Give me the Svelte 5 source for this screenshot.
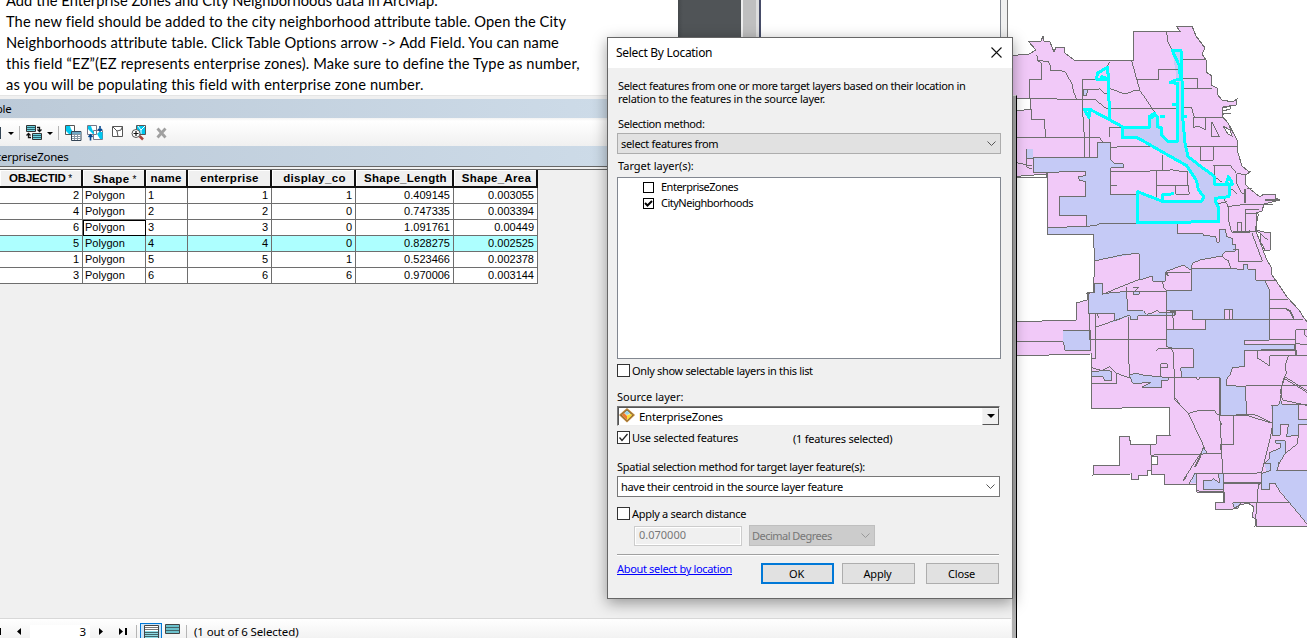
<script>
  const lines = [
    { t: 'Add the Enterprise Zones and City Neighborhoods data in ArcMap.', s: 'a' },
    { t: 'The new field should be added to the city neighborhood attribute table. Open the City', s: 'b' },
    { t: 'Neighborhoods attribute table. Click Table Options arrow -> Add Field. You can name', s: 'c' },
    { t: 'this field “EZ”(EZ represents enterprise zones). Make sure to define the Type as number,', s: 'd' },
    { t: 'as you will be populating this field with enterprise zone number.', s: 'e' }
  ];
  const heads = ['OBJECTID', 'Shape', 'name', 'enterprise', 'display_co', 'Shape_Length', 'Shape_Area'];
  const rows = [
    ['2', 'Polygon', '1', '1', '1', '0.409145', '0.003055'],
    ['4', 'Polygon', '2', '2', '0', '0.747335', '0.003394'],
    ['6', 'Polygon', '3', '3', '0', '1.091761', '0.00449'],
    ['5', 'Polygon', '4', '4', '0', '0.828275', '0.002525'],
    ['1', 'Polygon', '5', '5', '1', '0.523466', '0.002378'],
    ['3', 'Polygon', '6', '6', '6', '0.970006', '0.003144']
  ];
</script>

<div class="screen">
  <section class="top">
    <article class="doc">
      {#each lines as l}
        <p><span class={l.s}>{l.t}</span></p>
      {/each}
    </article>
    <div class="gutter"></div>
    <div class="scroll"></div>
    <div class="edge"></div>
    <div class="blank"></div>
    <div class="frame"></div>
  </section>

  <svg class="map" viewBox="1008 0 299 638" width="299" height="638" shape-rendering="crispEdges">
    <path class="pink" d="M1008 56L1029 54L1036 50L1028 41H1041L1043 36L1044 41L1050 42L1054 52L1056 47H1064L1065 53L1074 60H1133V31H1180L1176 26H1192L1196 36L1205 48L1202 54L1206 60V72L1212 76L1211 85L1217 88V94L1222 100L1233 102L1237 99L1236 105L1223 107L1222 116L1228 123L1237 140L1238 153L1242 166L1248 171H1251L1246 175L1245 184L1250 189L1260 197L1264 194H1275V198L1280 200L1264 204L1262 211L1256 213V230L1264 232H1270V250L1265 251L1263 246L1260 242V233L1256 231L1266 258L1271 267L1272 275L1281 288L1287 297L1299 310L1304 318L1310 325V526H1256V519L1252 517L1254 507L1248 503L1240 505L1231 510L1215 509V502H1224V492H1197L1196 484H1164V474H1151V470H1147V475H1138V479H1131V474L1093 475V465H1119V436H1129L1131 445L1156 444V435H1170L1169 407L1154 407L1091 409L1091 354L1008 356V322L1076 320V303L1087 300V293L1093 292L1095 262L1093 234H1047V174L1008 177Z" />
    <path class="hole" d="M1008 99H1031L1030 109L1008 112ZM1222 108L1231 106L1230 109L1223 111ZM1223 126L1230 130L1232 136L1228 134ZM1151 456H1157V464H1151Z" />

    <g transform="translate(1010 20) scale(.33333)">
      <path class="blue" d="M70 412H263V367H301V418L314 432H340V444H302V525H383L383 515L460 545H575L582 530L560 485L530 437L380 352H337V322H418V290L433 280L454 324L473 364H502V190L487 92H513L518 290L534 410L612 470L615 493H657V530L617 535L625 605L270 614L230 617V587H149V529H227V484L208 482L205 470L227 467V455L70 457ZM49 386H68V415H49ZM220 209H235L228 227H220Z" />
      <path class="line" d="M20 237L138 236L142 238H200L190 213L186 193L168 158L150 150L123 153V140L114 124L84 122L96 132V178H60V237M96 132L84 122L80 105M63 237L62 268L20 272M64 268V298H104L106 354M20 354H210L230 352L268 352L278 366M298 352V322H337M219 178V290L223 350V412M240 290V412M219 178L257 180M219 208L270 207L283 220H290M300 125L290 142M298 205L345 222L370 213H390M365 122L380 178L390 212L430 270L436 280M142 238L255 238L288 265H498M380 178H447V148H508M470 35L473 65L487 92M512 118H589M512 175H562V205M512 205H605M518 263H545L553 292H640M550 292V322L565 318L588 330V293M606 305L628 350H606ZM525 379H682M571 379V421H610V379M302 382L360 379L425 378M302 453L400 455L440 451H478L485 448L495 452L534 455M457 405V450M440 452V535M440 496H534V455M534 496L538 523H498V496M302 498L322 497M49 386V440L67 448M49 415H70M20 428L65 438M110 458V472L20 472M263 412V367H301V418L314 432H340V444H302V525H383M263 412H70V457L227 455V467L205 470L208 482L227 484V529H149V587H230V617M220 209H235L228 227H220ZM610 438L660 435L680 460L710 465M612 438L613 470L635 486M680 462V490L695 520H708M655 500L680 520M623 552L650 545M640 535L655 560V600L665 636M650 560L705 553H790M705 507V550M708 507V550M710 507H725M706 570H748M706 570V634M683 607V634M683 607H694V634M706 582H745L735 634M670 636H745L773 660" />
      <path class="wide" d="M637 283L645 280L662 281M665 332L660 320M765 540H807" />
    </g>

    <g transform="translate(1010 220) scale(.33333)">
      <path class="blue" d="M113 22L229 20L273 10L380 6H502V40H578L582 47L617 49L620 67H628V28H647L649 50L667 55V75H677V93L645 96L635 108L570 120L547 130L543 151L520 135L467 155L466 184H428V168L388 180L387 100L253 123L250 43H113ZM545 146L702 148V133H713V148H737V181H765L778 210L780 360L703 362V375L855 373V388L703 391L705 440L668 442L660 465L648 480L650 497L707 499L709 586H632L630 472H515L512 443H550V387L490 385L472 380V328H587V298H547V271H470V211H545ZM254 190H277V223L350 214L352 271L400 272L410 283L470 278L498 275V286H383V300H362L360 288L300 310L315 295V281H236V222L254 218ZM160 333L243 331V391H165L160 365ZM243 456L290 450L306 455L305 481H283L280 470L243 468ZM358 465L378 459L398 465L455 471L475 473V481H455V502H395L423 488L368 490ZM370 215H388V223H370Z" />
      <path class="pink" d="M643 268H667V298H643Z" />
      <path class="line" d="M113 22L229 20L260 15L273 10H502V40H578L582 47L617 49L620 67H628V28H647L649 50L667 55V75H677V93L645 96L635 108L570 120L547 130L543 151L520 135L467 155L466 184H428V168L388 180L387 100L340 104L253 123M635 108L645 118L655 121L662 146M545 146H660L702 148V133H713V148H737V181H765L778 210L780 360L703 362V375L855 373V388L703 391L705 440L668 442L660 465L648 480L650 497L707 499L709 586H632L630 472H568V478H560V472H475M550 443H512L515 470M550 443V387L490 385L470 380V211H545V146M470 271H547V298H587V328H472M545 298H880M643 298V268H667V298M658 268V298M457 184L462 205L470 211M470 157H540M470 155L472 168M388 178L277 223V190H254V218L229 220M277 221L350 214H470M350 200L352 271L380 272L400 272L410 283L430 278L440 271L450 278H498L495 286L383 288V300H362L360 288H352L256 322M236 222V281H315V302L340 293M256 281V416H243M240 281V360M355 290V360L358 465M243 360H330L470 358V275M160 333L243 331V391H165L160 365L20 365M486 275L490 300V328M440 392L445 386L485 387L490 400L493 472L493 530L518 565M453 472V431H472V444H453M243 456L290 450L306 455L305 481H283L280 470L243 468M243 442L275 452L300 440L320 460L360 474M243 490H320V458M358 465L378 459L398 465L455 471L475 473V481H455V502H395L423 488L368 490ZM370 203H386L375 212M370 215V223H388V215M263 282L265 295M315 281V302M667 38H720V30M683 7V36H672M726 40L757 123L686 125V90H670M737 181H800M778 238H835M778 265H825L845 280L852 295M780 360H857V330H891M857 360V408M703 391H860V408M742 391V414L780 438V408H891M835 408L825 440L830 460L821 475L811 515L818 540L891 556M707 497H891M822 475L891 517M891 375L857 370M885 330V345L891 350" />
      <path class="wide" d="M823 264L840 272L852 296M470 158L474 168M480 276H495V284" />
    </g>

    <g transform="translate(1080 370) scale(.33333)">
      <path class="blue" d="M574 106H595L601 90L608 105H655V150H690V163H655V195L620 200L625 163H603L600 197H578ZM586 212H616V250L600 275L590 302H690V468L630 400L585 340H568L570 360H545L543 310L560 305L553 280L568 265L570 247L600 235L603 222L588 220ZM370 333H395L400 325L410 333L420 340L415 311H430V360H400L370 357ZM370 232L382 250L363 253ZM340 311H349L347 340H333ZM458 399H482L473 415H463Z" />
      <path class="line" d="M574 106H595L601 90L608 105H655V150H690M690 163H655V195L620 200L625 163H603L600 197H578V106M578 160L535 138L520 134L420 136L410 133L405 122H355L325 130L284 88V0M419 23V136L424 220L428 310M461 138V223H425M325 130L373 232L310 330M214 256L240 253L375 252H424M211 223V256M216 256V312M363 253L370 232L382 250ZM325 345L345 310L520 312L545 306L572 200L578 160M350 311V360L360 364H430V311M370 333H395L400 325L410 333L420 340L415 311M370 333V357L400 360H430M432 338H545M431 340V398M431 340H545L535 345L525 470M458 399H630M458 399L463 415H473L482 399M586 212H616V250L600 275L590 302H690M586 212L588 220L603 222L600 235L570 247L568 265L553 280H572V302L545 310L545 360L570 360L568 340H585L600 365L630 400L681 462M655 195L652 222L616 250M606 50L601 90M606 48L615 20M614 20L690 68M655 105H690M499 136L578 160" />
      <path class="wide" d="M363 256L348 285L344 291M318 318L310 332M432 339H486M424 160V166M422 222V240M595 278L600 280" />
    </g>

    <path class="outline" d="M1008 56L1029 54L1036 50L1028 41H1041L1043 36L1044 41L1050 42L1054 52L1056 47H1064L1065 53L1074 60H1133V31H1180L1176 26H1192L1196 36L1205 48L1202 54L1206 60V72L1212 76L1211 85L1217 88V94L1222 100L1233 102L1237 99L1236 105L1223 107L1222 116L1228 123L1237 140L1238 153L1242 166L1248 171H1251L1246 175L1245 184L1250 189L1260 197L1264 194H1275V198L1280 200L1264 204L1262 211L1256 213V230L1264 232H1270V250L1265 251L1263 246L1260 242V233M1256 231L1266 258L1271 267L1272 275L1281 288L1287 297L1299 310L1304 318L1310 325M1310 526H1256V519L1252 517L1254 507L1248 503L1240 505L1231 510L1215 509V502H1224V492H1197L1196 484H1164V474H1151V470H1147V475H1138V479H1131V474L1093 475V465H1119V436H1129L1131 445L1156 444V435H1170L1169 407L1154 407L1091 409L1091 354L1008 356M1008 322L1076 320V303L1087 300V293L1093 292L1095 262L1093 234H1047V174L1008 177M1222 108L1231 106L1230 109L1223 111ZM1223 126L1230 130L1232 136L1228 134ZM1151 456H1157V464H1151Z" />

    <g class="glow" transform="translate(1010 20) scale(.33333)">
      <path d="M383 608V515L460 545H573L582 532L565 508L560 483L530 437L380 352H337V322H418V290L433 280L443 292V320L454 324L455 345L473 364H502V190L480 188L498 180H512L507 135L487 92H513L516 180L518 290L525 370L534 410L580 445L612 468L615 493H667L664 483L655 470L650 487L658 493L657 530L617 535L618 548L625 560V605Z" />
      <path d="M337 320L240 268H222L237 292L240 270M298 298L296 180L260 178L262 160L292 142L296 178L272 168M457 543L458 525L492 521M450 290H466M487 253H502M518 290H532M424 295L435 285" />
    </g>
  </svg>

  <section class="win">
    <header class="band first"><span>Table</span></header>
    <div class="tools">
      <i class="stub"></i>
      <i class="tri"></i>
      <i class="sep"></i>
      <svg class="t1" width="17" height="16" viewBox="0 0 17 16">
        <path d="M.5.500h9v6h-9zM6.500 8.500h9v6h-9z" fill="#6fd2df" stroke="#333" />
        <path d="M1 2.500h8M1 4.500h8M7 10.500h8M7 12.500h8" stroke="#26616c" />
        <path d="M11 2.500h2.500v4M11.500 4.500l2 2 2-2M5 12.500H2.500v-4M.5 10.500l2-2 2 2" fill="none" stroke="#111" stroke-width="1.300" />
      </svg>
      <i class="tri"></i>
      <i class="sep"></i>
      <svg class="t2" width="17" height="16" viewBox="0 0 17 16">
        <path d="M.5.5h9v9h-9z" fill="#fff" stroke="#555" /><path d="M1 1h4l1 3 3 5H4L1 6z" fill="#00c8f0" />
        <path d="M6.500 6.500h9.500v9H6.500z" fill="#fff" stroke="#345" /><path d="M7 7h9v2H7z" fill="#6fa7c4" /><path d="M7 9.500h9M7 11.500h9M7 13.500h9M9.500 9v6M12.500 9v6" stroke="#8797a5" />
      </svg>
      <svg class="t3" width="17" height="16" viewBox="0 0 17 16">
        <path d="M.5.5h9v9h-9zM6.500 5.500h9v9h-9z" fill="#fff" stroke="#778" />
        <path d="M1 1h3l1 3 2 4v1H6L1 4zM12 7h3.500v7H13l-3-5z" fill="#00c8f0" />
        <path d="M3.500 15.500V10M1.500 12L3.500 10l2 2M13 1v5M11 4l2 2 2-2" fill="none" stroke="#074a91" stroke-width="1.600" />
      </svg>
      <svg class="t4" width="12" height="12" viewBox="0 0 12 12"><path d="M.5.5h10v10H.5zM1 1l4 4 1 5.500M5 5l4-1 1.500-3.500" fill="#fff" stroke="#555" /></svg>
      <svg class="t5" width="17" height="16" viewBox="0 0 17 16">
        <path d="M5.500.5h9v9h-9z" fill="#00c8f0" stroke="#555" /><path d="M7 1l3 4 4-4M10 5v4" stroke="#fff" fill="none" />
        <path d="M8.500 11l3.500 3.500" stroke="#a54238" stroke-width="2.500" /><circle cx="5" cy="8.500" r="4" fill="#fff" stroke="#555" /><path d="M2.500 8.500h5M5 6v5" stroke="#111" stroke-width="1.200" />
      </svg>
      <svg class="t6" width="12" height="12" viewBox="0 0 12 12"><path d="M1.500 1.500l8 9M9.500 1.500l-8 9" stroke="#a0a0a0" stroke-width="2.800" /></svg>
    </div>
    <header class="band second"><span>EnterpriseZones</span></header>
    <div class="pane">
      <div class="grid head">
        {#each heads as h, i}
          <b class="h{i}">{h}{#if i < 2}<small>&nbsp;*</small>{/if}</b>
        {/each}
      </div>
      {#each rows as r, i}
        <div class="grid row" class:sel={i === 3}>
          {#each r as c, j}
            <span class:left={j === 1 || j === 2} class:cur={i === 2 && j === 1}>{c}</span>
          {/each}
        </div>
      {/each}
    </div>
    <footer>
      <svg class="nav" width="30" height="9" viewBox="0 0 30 9"><path d="M0 1h1v7H0zM21 1v7l-4-3.500z" /></svg>
      <span class="num">3</span>
      <svg class="nav2" width="34" height="9" viewBox="0 0 34 9"><path d="M3 1v7l4-3.500zM23 1v7l4-3.500zM29 1h2v7h-2z" /></svg>
      <i class="sep"></i>
      <span class="mode">
        <svg width="17" height="18" viewBox="0 0 17 18"><path d="M1.500 1.500h14v18h-14z" fill="#fff" stroke="#444" /><path d="M2 3.500h13M2 5.500h13" stroke="#777" /><path d="M2 7h13v12H2z" fill="#8edbe4" /><path d="M2 8.500h13M2 10.500h13M2 12.500h13M2 14.500h13" stroke="#42666b" /></svg>
      </span>
      <svg class="mini" width="15" height="10" viewBox="0 0 15 10"><path d="M.5.5h14v9H.5z" fill="#6cc1cc" stroke="#444" /><path d="M1 3.500h13M1 6.500h13" stroke="#42666b" /></svg>
      <i class="sep"></i>
      <span class="status">(1 out of 6 Selected)</span>
    </footer>
  </section>

  <section class="dialog">
    <header class="title"><span>Select By Location</span>
      <svg width="11" height="11" viewBox="0 0 11 11"><path d="M.5.500l10 10M10.500.500l-10 10" stroke="#111" stroke-width="1.100" /></svg>
    </header>
    <div class="body">
      <p class="intro"><span class="w1">Select features from one or more target layers based on their location in</span><br /><span class="w2">relation to the features in the source layer.</span></p>
      <div class="lab l1"><span>Selection method:</span></div>
      <div class="drop grey"><span>select features from</span><svg width="9" height="6" viewBox="0 0 9 6"><path d="M.5.500l4 4 4-4" fill="none" stroke="#555" /></svg></div>
      <div class="lab l2"><span>Target layer(s):</span></div>
      <div class="list">
        <div class="item"><i class="box"></i><span>EnterpriseZones</span></div>
        <div class="item"><i class="box"><svg width="9" height="9" viewBox="0 0 9 9"><path d="M1 4l2.500 2.500L8 2" fill="none" stroke="#000" stroke-width="2" /></svg></i><span>CityNeighborhoods</span></div>
      </div>
      <div class="check c1"><i class="cb"></i><span>Only show selectable layers in this list</span></div>
      <div class="lab l3"><span>Source layer:</span></div>
      <div class="combo">
        <svg width="16" height="15" viewBox="0 0 16 15"><path d="M8 0l8 7-8 7.500L0 7z" fill="#b58237" /><path d="M8 2l5.500 5L8 12.500 2.500 7z" fill="#fff3b8" stroke="#5d3b10" stroke-width=".7" /><path d="M8 2.500L11 5.500 8 7 5.500 5z" fill="#9bd4ea" /><path d="M5 5l3 3v4L3 7z" fill="#ee7a2f" /><path d="M8 7.500l3.500-1.500L13 7l-5 5z" fill="#ffdc35" /></svg>
        <span>EnterpriseZones</span><i class="arrow"></i>
      </div>
      <div class="check c2"><i class="cb"><svg width="11" height="11" viewBox="0 0 11 11"><path d="M1.500 5.500l2.500 3 5.500-6.500" fill="none" stroke="#222" stroke-width="1.300" /></svg></i><span class="use">Use selected features</span><span class="count">(1 features selected)</span></div>
      <div class="lab l4"><span>Spatial selection method for target layer feature(s):</span></div>
      <div class="drop white"><span>have their centroid in the source layer feature</span><svg width="9" height="6" viewBox="0 0 9 6"><path d="M.5.500l4 4 4-4" fill="none" stroke="#555" /></svg></div>
      <div class="check c3"><i class="cb"></i><span>Apply a search distance</span></div>
      <div class="dist"><div class="field"><span>0.070000</span></div><div class="units"><span>Decimal Degrees</span><svg width="9" height="6" viewBox="0 0 9 6"><path d="M.5.500l4 4 4-4" fill="none" stroke="#999" /></svg></div></div>
      <div class="rule"></div>
      <div class="acts"><a href="#about"><span>About select by location</span></a><button class="ok">OK</button><button class="apply">Apply</button><button>Close</button></div>
    </div>
  </section>
</div>

<style>
  :global(body) { margin: 0; overflow: hidden; }
  * { box-sizing: border-box; }
  .screen { position: relative; width: 1307px; height: 638px; overflow: hidden; background: #fff; font: 11px/13px "Noto Sans", sans-serif; color: #000; }
  span, b { white-space: nowrap; }
  i { display: block; flex: none; }
  svg { display: block; flex: none; }
  .top { display: flex; width: 1008px; height: 96px; }
  .doc { width: 678px; overflow: hidden; font: 14.670px/21px Lato, sans-serif; padding-left: 6px; }
  .doc p { margin: 0; height: 21px; }
  .doc p:first-child { margin-top: -10px; }
  .a { letter-spacing: .06px; }
  .b { letter-spacing: .09px; }
  .c { letter-spacing: .11px; }
  .d { letter-spacing: .15px; }
  .e { letter-spacing: .14px; }
  .gutter { width: 63px; background: linear-gradient(90deg, #45494c, #505457 5px); }
  .scroll { width: 16px; background: #bfbfbf; border-left: 2px solid #eee; border-right: 1px solid #ddd; }
  .edge { width: 4px; background: #ddd; border-right: 2px solid #464c68; }
  .blank { width: 240px; background: #fff; border-right: 1px solid #828790; }
  .frame { width: 7px; background: #f0f0f0; border-right: 1px solid #777; }
  .map { position: absolute; left: 1008px; top: 0; background: #fff; }
  .pink { fill: #f1c9f8; }
  .blue { fill: #c5caf6; }
  .hole { fill: #fff; }
  .line { fill: none; stroke: #6e6e6e; stroke-width: 3; }
  .wide { fill: none; stroke: #6e6e6e; stroke-width: 5; }
  .outline { fill: none; stroke: #6e6e6e; stroke-width: 1; }
  .glow { fill: none; stroke: #00ffff; stroke-width: 9; stroke-linejoin: round; }
  .win { position: absolute; left: 0; top: 95px; width: 1017px; height: 543px; background: #f0f0f0; border-top: 1px solid #e5e5e5; border-right: 1px solid #000; box-shadow: inset -4px 0 #b0b0b0; font-size: 11.500px; letter-spacing: -.15px; }
  .band { height: 19px; width: 1013px; background: linear-gradient(90deg, #bccad8, #cddbe8 60%); display: flex; align-items: center; }
  .first { margin-top: 3px; }
  .first span { margin-left: -16px; }
  .tools { height: 28px; width: 1013px; background: linear-gradient(#f2f2f2, #fff 3px, #f0f0f0); display: flex; align-items: center; padding-top: 2px; }
  .stub { width: 1px; height: 12px; background: #345; }
  .tri { border: 3px solid transparent; border-top-color: #000; border-bottom: 0; margin-left: 7px; }
  .sep { width: 1px; height: 14px; background: #b5b5b5; }
  .tools .sep { margin-left: 5px; }
  .t1 { margin-left: 6px; }
  .t1 + .tri { margin-left: 4px; }
  .t2 { margin-left: 6px; }
  .t3 { margin-left: 5px; }
  .t4 { margin: -3px 0 0 8px; }
  .t5 { margin-left: 7px; }
  .t6 { margin-left: 8px; }
  .second { height: 20px; }
  .second span { margin-left: -16px; letter-spacing: -.25px; }
  .pane { height: 452px; width: 1011px; border-top: 4px double #666; background: #f0f0f0; font: 11px/15px "Liberation Sans", Arial, sans-serif; letter-spacing: 0; }
  .grid { display: grid; grid-template-columns: 83px 63px 42px 84px 84px 98px 84px; width: 538px; }
  .head { height: 18px; }
  .head b { border-right: 2px solid #111; border-bottom: 2px solid #111; box-shadow: inset 1px 1px #fff; text-align: center; font-size: 11.500px; line-height: 16px; letter-spacing: .3px; padding-left: 3px; overflow: hidden; }
  .head .h0 { letter-spacing: -.2px; padding-left: 0; }
  .head .h1 { line-height: 18px; }
  .head .h2 { padding-left: 0; }
  .head .h3 { padding-left: 1px; }
  .head small { font-size: 10px; font-weight: normal; }
  .row { height: 16px; background: #fff; }
  .row span { border-right: 1px solid #6e6e6e; border-bottom: 1px solid #6e6e6e; text-align: right; padding-right: 3px; }
  .row .left { text-align: left; padding-left: 2px; }
  .row.sel { background: #adffff; }
  .row .cur { outline: 1px solid #000; outline-offset: -1px; }
  footer { height: 20px; width: 1011px; border-top: 1px solid #d8d8d8; background: linear-gradient(#fff, #f2f2f2); display: flex; align-items: center; padding-top: 6px; }
  .nav { width: 30px; }
  .num { width: 60px; height: 14px; line-height: 14px; background: #fff; text-align: right; padding-right: 4px; }
  .nav2 { margin-left: 6px; }
  .nav2 + .sep { margin-left: 6px; }
  .mode { width: 22px; height: 18px; border: 1px solid #0078d7; background: #cce4f7; margin-left: 3px; padding-left: 2px; overflow: hidden; }
  .mini { margin: -5px 6px 0 3px; }
  .status { margin-left: 7px; letter-spacing: -.1px; }
  .dialog { position: absolute; left: 607px; top: 37px; width: 406px; height: 562px; border: 1px solid #666; background: #f0f0f0; box-shadow: 0 4px 14px rgba(0, 0, 0, .38); letter-spacing: -.3px; }
  .title { height: 30px; background: #fff; display: flex; justify-content: space-between; align-items: center; padding: 0 10px 0 8px; font-size: 12px; }
  .title span { margin-top: -2px; }
  .title svg { margin-top: -2px; }
  .body { padding: 11px 11px 0 9px; }
  .intro { margin: 0 0 0 1px; height: 38px; }
  .w1 { letter-spacing: -.35px; }
  .w2 { letter-spacing: -.24px; }
  .lab { height: 15px; line-height: 13px; }
  .l1 { padding-left: 1px; height: 16px; letter-spacing: -.4px; }
  .l2 { padding: 5px 0 0 1px; height: 23px; letter-spacing: 0; }
  .drop { height: 21px; width: 384px; border: 1px solid #adadad; background: #e1e1e1; display: flex; justify-content: space-between; align-items: center; padding: 0 4px 0 3px; }
  .white { width: 383px; background: #fff; border-color: #777; }
  .list { height: 182px; width: 384px; border: 1px solid #828790; background: #fff; padding: 2px 0 0 25px; letter-spacing: -.5px; }
  .item { height: 16px; display: flex; align-items: center; gap: 7px; }
  .item span { margin-top: -3px; }
  .box { width: 11px; height: 11px; margin-top: -2px; border: 1px solid #000; background: #fff; }
  .check { display: flex; align-items: center; gap: 2px; height: 13px; }
  .cb { width: 13px; height: 13px; border: 1px solid #333; background: #fff; }
  .c1 { margin-top: 5px; letter-spacing: -.33px; }
  .l3 { margin-top: 13px; height: 16px; letter-spacing: 0; }
  .combo { height: 20px; width: 383px; background: #fff; border: 1px solid; border-color: #777 #eee #eee #777; box-shadow: inset 1px 1px #555; display: flex; align-items: center; padding: 1px 0 0 1px; }
  .combo svg { margin-top: -3px; }
  .combo span { margin-left: 4px; font-size: 11.500px; }
  .arrow { width: 17px; height: 17px; margin: -1px 0 0 auto; background: #f0f0f0; border: 1px solid; border-color: #f5f5f5 #555 #555 #f5f5f5; display: flex; align-items: center; justify-content: center; }
  .arrow::after { content: ""; border: 4px solid transparent; border-top-color: #000; border-bottom: 0; }
  .c2 { margin-top: 5px; letter-spacing: -.22px; }
  .use { width: 159px; }
  .count { padding-top: 2px; }
  .l4 { margin-top: 16px; height: 16px; letter-spacing: -.28px; }
  .c3 { margin-top: 10px; }
  .dist { display: flex; margin: 5px 0 0 17px; gap: 7px; color: #777; align-items: center; }
  .field { width: 108px; height: 20px; border: 1px solid #ccc; box-shadow: inset 0 0 0 1px #fff; padding: 1px 4px; letter-spacing: 0; }
  .units { width: 126px; height: 21px; border: 1px solid #bfbfbf; background: #ccc; display: flex; align-items: center; justify-content: space-between; padding: 0 4px 0 2px; letter-spacing: -.52px; }
  .rule { height: 2px; width: 382px; margin-top: 8px; border-top: 1px solid #a0a0a0; background: #fff; }
  .acts { display: flex; margin-top: 7px; }
  .acts a { width: 144px; color: #00f; text-decoration: underline; margin-top: -1px; letter-spacing: -.33px; }
  button { width: 73px; height: 21px; border: 1px solid #adadad; background: #e1e1e1; font: inherit; letter-spacing: -.2px; padding: 0 2px 0 0; color: #000; }
  .ok { border: 2px solid #0078d7; margin-right: 8px; }
  .apply { margin-right: 11px; }
</style>
